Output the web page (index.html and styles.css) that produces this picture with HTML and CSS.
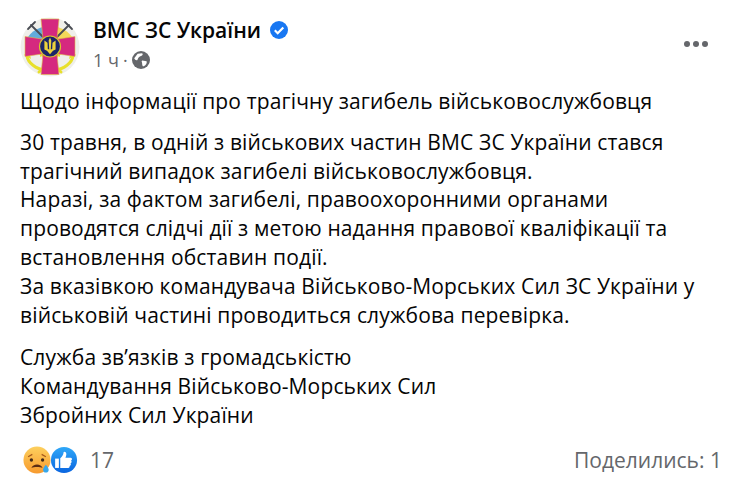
FILE: index.html
```html
<!DOCTYPE html>
<html lang="uk">
<head>
<meta charset="utf-8">
<title>ВМС ЗС України</title>
<link rel="stylesheet" href="styles.css">
</head>
<body>
<article class="post">
  <header class="head">
    <svg class="avatar" viewBox="0 0 60 60" aria-hidden="true">
      <circle cx="30" cy="30" r="29.500" fill="#efefea"/>
      <path d="M5 28a25 21 0 0 1 25-19v19z" fill="#62acdc"/>
      <path d="M30 9a25 21 0 0 1 25 19H30z" fill="#f3d95a"/>
      <g stroke="#4a4d55" stroke-width="1.800" fill="none" stroke-linecap="round">
        <path d="M11 8 24 21M49 8 36 21"/>
        <path d="M8 12 15 5M52 12 45 5"/>
      </g>
      <g stroke="#e8e02a" stroke-width="3" fill="none" stroke-linecap="round">
        <path d="M7 39c1 7 9 13 18 14M53 39c-1 7-9 13-18 14"/>
        <path d="M20 36 41 55M40 36 19 55"/>
      </g>
      <path d="M4 38 9 34 11 42zM56 38 51 34 49 42zM20 40 27 36 20 33zM40 40 33 36 40 33z" fill="#e8e02a"/>
      <path d="M21 2h18l-1.800 18 .8 2 17-2.500v20l-17-2.500-.8 2 1.800 18.500h-18l1.800-18.500-.8-2-17 2.500v-20l17 2.500.8-2z" fill="#d5297f" stroke="#e3bb46" stroke-width=".6"/>
      <circle cx="30" cy="29.500" r="10.500" fill="#1b2568" stroke="#d9c530" stroke-width="1.200"/>
      <path d="M30 20.500l1.300 3-.5 9 1.400-.6.300-6.100 3.100-2.300v9l-2.600 1.200-3 3.600-3-3.600-2.600-1.200v-9l3.100 2.300.3 6.100 1.400.6-.5-9z" fill="#ecd23c"/>
    </svg>
    <div class="meta">
      <div class="title">
        <span class="name">ВМС ЗС України</span>
        <svg class="badge" viewBox="0 0 20 20" aria-hidden="true">
          <circle cx="10" cy="10" r="9" fill="#1877f2"/>
          <path d="M5.800 10.300 8.700 13.200 14.300 7.400" fill="none" stroke="#fff" stroke-width="2.200"/>
        </svg>
      </div>
      <div class="sub">
        <span>1 ч</span><span class="dot">·</span>
        <svg class="globe" viewBox="0 0 16 16" aria-hidden="true">
          <circle cx="8" cy="8" r="8" fill="#65676b"/>
          <path d="M5 2.500 9 2c1 1 .5 2-1 2.500S5.500 6 5 7.500 2.500 8 2 6.500zM9 8.500l4 .5c.5 1.500-.5 3.500-2.500 4.500-1 .5-1.500-1-1.500-2.500S8 9.500 9 8.500z" fill="#fff"/>
        </svg>
      </div>
    </div>
    <div class="more" aria-label="Ещё"><i></i><i></i><i></i></div>
  </header>
  <div class="body">
    <p>Щодо інформації про трагічну загибель військовослужбовця</p>
    <p>30 травня, в одній з військових частин ВМС ЗС України стався<br>трагічний випадок загибелі військовослужбовця.<br>Наразі, за фактом загибелі, правоохоронними органами<br>проводятся слідчі дії з метою надання правової кваліфікації та<br>встановлення обставин події.<br>За вказівкою командувача Військово-Морських Сил ЗС України у<br>військовій частині проводиться службова перевірка.</p>
    <p class="closing">Служба зв’язків з громадськістю<br>Командування Військово-Морських Сил<br>Збройних Сил України</p>
  </div>
  <footer class="foot">
    <div class="reactions">
      <svg class="react sad" viewBox="0 0 30 30" aria-hidden="true">
        <defs>
          <linearGradient id="sadFace" x1="0" y1="0" x2="0" y2="1"><stop offset="0" stop-color="#fdd05e"/><stop offset="1" stop-color="#f79a2e"/></linearGradient>
          <linearGradient id="likeFace" x1="0" y1="0" x2="0" y2="1"><stop offset="0" stop-color="#2fa8f8"/><stop offset="1" stop-color="#0a65e0"/></linearGradient>
        </defs>
        <circle cx="15" cy="15" r="14.500" fill="url(#sadFace)"/>
        <circle cx="9" cy="15" r="1.800" fill="#40291a"/>
        <circle cx="21" cy="15" r="1.800" fill="#40291a"/>
        <path d="M5.500 11.500 10 9M24.500 11.500 20 9" stroke="#a65a1c" stroke-width="1.300" fill="none"/>
        <path d="M9 23.500c1.500-5 10.500-5 12 0-3-1.500-9-1.500-12 0z" fill="#5a2c14"/>
        <path d="M24.500 20c2 2.500 3 4 3 5.500a3 3 0 0 1-6 0c0-1.500 1-3 3-5.500z" fill="#35a7ec"/>
      </svg>
      <svg class="react like" viewBox="0 0 30 30" aria-hidden="true">
        <circle cx="15" cy="15" r="14" fill="url(#likeFace)"/>
        <path d="M5.500 13.500h4v10h-4z" fill="#fff"/>
        <path d="M11 23.500V13c2-1.500 3.500-4 3.500-6 0-1.500 3-1 3 1.500 0 1.500-.5 3-1 4h5.500c2 0 2 2.500.5 3 1 .8 1 2.500-.5 3 .7 1 .5 2.500-1 3 .3 1-.3 2-1.500 2z" fill="#fff"/>
      </svg>
      <span class="count">17</span>
    </div>
    <div class="shares">Поделились: 1</div>
  </footer>
</article>
</body>
</html>
```
FILE: styles.css
```css
html, body {
  margin: 0;
  padding: 0;
  background: #fff;
}
body {
  width: 741px;
  height: 484px;
  overflow: hidden;
  font-family: "Open Sans", "Noto Sans", sans-serif;
  color: #050505;
}
.post {
  display: flex;
  flex-direction: column;
  padding: 17px 19px 0 20px;
}
.head {
  display: flex;
  align-items: flex-start;
  gap: 13px;
}
.avatar {
  width: 60px;
  height: 60px;
  flex: none;
}
.meta {
  flex: 1;
}
.title {
  display: flex;
  align-items: center;
  gap: 8px;
}
.name {
  font-size: 21px;
  font-weight: 600;
  line-height: 26px;
}
.badge {
  width: 20px;
  height: 20px;
}
.sub {
  display: flex;
  align-items: center;
  margin-top: 5px;
  color: #65676b;
  font-size: 18px;
  line-height: 24px;
}
.dot {
  margin: 0 4px;
}
.globe {
  width: 18px;
  height: 18px;
}
.more {
  display: flex;
  gap: 3px;
  margin: 24px 14px 0 0;
}
.more i {
  width: 6px;
  height: 6px;
  border-radius: 50%;
  background: #65676b;
}
.body {
  margin-top: 10px;
  font-size: 21px;
  letter-spacing: .14px;
  line-height: 28.800px;
}
.body p {
  margin: 0 0 12px;
}
.body .closing {
  margin-top: 14px;
}
.foot {
  display: flex;
  align-items: center;
  justify-content: space-between;
  margin-top: 4px;
  color: #65676b;
  font-size: 21px;
  line-height: 28px;
}
.reactions {
  display: flex;
  align-items: center;
  padding-left: 3px;
}
.react {
  width: 28px;
  height: 28px;
}
.like {
  margin-left: -1px;
}
.count {
  margin-left: 12px;
}
```
